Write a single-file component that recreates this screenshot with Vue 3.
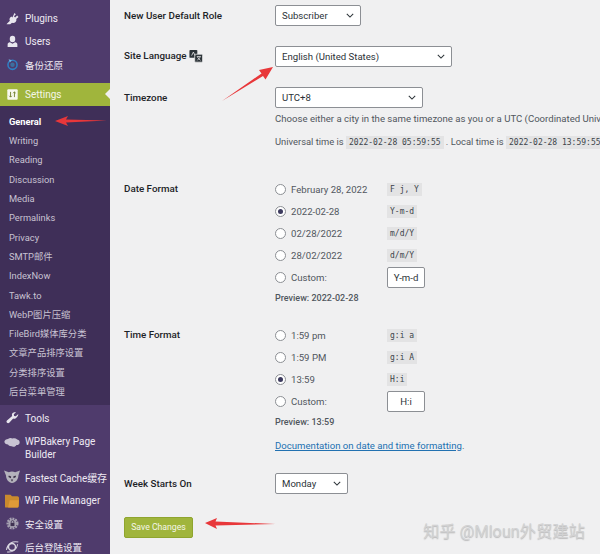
<script setup>
const subItems = [
  { label: 'General', current: true },
  { label: 'Writing' }, { label: 'Reading' }, { label: 'Discussion' }, { label: 'Media' },
  { label: 'Permalinks' }, { label: 'Privacy' }, { label: 'SMTP邮件' }, { label: 'IndexNow' },
  { label: 'Tawk.to' }, { label: 'WebP图片压缩' }, { label: 'FileBird媒体库分类' },
  { label: '文章产品排序设置' }, { label: '分类排序设置' }, { label: '后台菜单管理' }
]
const dateOptions = [
  { label: 'February 28, 2022', code: 'F j, Y' },
  { label: '2022-02-28', code: 'Y-m-d', checked: true },
  { label: '02/28/2022', code: 'm/d/Y' },
  { label: '28/02/2022', code: 'd/m/Y' }
]
const timeOptions = [
  { label: '1:59 pm', code: 'g:i a' },
  { label: '1:59 PM', code: 'g:i A' },
  { label: '13:59', code: 'H:i', checked: true }
]
</script>

<template>
  <div class="page">
    <aside class="sidebar">
      <ul class="menu top">
        <li>
          <svg class="ic" viewBox="0 0 20 20"><path fill="#e8e6ee" d="M13 1.500l2.200 2-3 3.200 1.800 1.800 3.200-3 2 2.200-3.400 3.200c.6 2 0 3.800-1.500 5-1.500 1.300-3.500 1.500-5 .6L6.500 19 1 19l0-.5 5-5c-1-1.500-.8-3.500.5-5l1.800-1.700 1.500 1.500z"/></svg>
          <span>Plugins</span>
        </li>
        <li>
          <svg class="ic" viewBox="0 0 20 20"><ellipse cx="10" cy="6" rx="4.200" ry="5" fill="#e8e6ee"/><path fill="#e8e6ee" d="M2.500 18.500V14.500c0-2 1.500-3.500 3.500-3.500l4 2.500 4-2.500c2 0 3.500 1.500 3.500 3.500v4z"/></svg>
          <span>Users</span>
        </li>
        <li>
          <svg class="ic" viewBox="0 0 20 20"><circle cx="10" cy="10.500" r="7" fill="none" stroke="#2f7fc4" stroke-width="2.400"/><circle cx="10" cy="10.500" r="3.400" fill="#3d6f9f"/><path d="M4 2l5 1.500-3 3.500z" fill="#6db0e0"/></svg>
          <span class="cjk">备份还原</span>
        </li>
      </ul>
      <div class="settings">
        <svg class="ic" viewBox="0 0 20 20"><rect x="2" y="2" width="16" height="16" rx="1.500" fill="#f7f8ee"/><path d="M7 6v8M5 12l2 2 2-2M13 14V6M11 8l2-2 2 2" fill="none" stroke="#6f7f2a" stroke-width="1.400"/></svg>
        <span>Settings</span>
        <i class="notch"></i>
      </div>
      <ul class="submenu">
        <li v-for="s in subItems" :key="s.label" :class="{ current: s.current }">{{ s.label }}</li>
      </ul>
      <ul class="menu bottom">
        <li>
          <svg class="ic" viewBox="0 0 20 20"><path fill="#e8e6ee" d="M18.500 3.500l-3.500 3-2.500-.5-.5-2.500 3.500-3c-2.500-.8-5 0-6 2-.6 1.300-.5 2.500 0 3.500L1.500 13c-1 1-1 2.500 0 3.500s2.500 1 3.500 0l6-6.500c1 .5 2.300.6 3.500 0 2-1 4-3.500 4.500-6.500z"/></svg>
          <span>Tools</span>
        </li>
        <li class="two">
          <svg class="ic wide" viewBox="0 0 20 14"><path fill="#c9c4d3" d="M5 2c2-1.500 4-1.500 5.500-.5C12.500.8 15 1 16.500 2.500 19 3 20 5 19.500 7c-.5 2-2.500 3-4 2.500-1 2-3.500 3-5.500 1.500-2 .5-4-.5-5-2C2.500 9 .5 7.500.5 5.500.5 3.500 3 2 5 2z"/></svg>
          <span>WPBakery Page<br>Builder</span>
        </li>
        <li>
          <svg class="ic wide" viewBox="0 0 20 16"><path fill="#b4b2bc" d="M0 0l6 2c2.500-1 5.500-1 8 0l6-2-2 6c0 5-3.500 9-8 9.500C6 15 2.500 11 2.500 6z"/><path fill="#3a3046" d="M6 6l3 1.500-.5 2L5.500 8zM14.500 6l-3 1.500.5 2L15 8zM8.500 11h3L10 14z"/></svg>
          <span class="tight">Fastest Cache缓存</span>
        </li>
        <li>
          <svg class="ic wide" viewBox="0 0 20 18"><path fill="#c98a2e" d="M1 1h7l2 2h7c1 0 2 1 2 2v10c0 1.500-1 2.500-2.500 2.500H2.500C1.500 17.500 1 17 1 16z"/><path fill="#e09a38" d="M7 8h12l-1.500 9.500H5z"/></svg>
          <span>WP File Manager</span>
        </li>
        <li>
          <svg class="ic" viewBox="0 0 20 20"><circle cx="10" cy="10" r="7.500" fill="none" stroke="#a7a2b2" stroke-width="3.500" stroke-dasharray="2.800 1.500"/><circle cx="10" cy="10" r="6.500" fill="#a7a2b2"/><rect x="7" y="9" width="6" height="5" fill="#3f3252"/><path d="M8 9V7.500a2 2 0 0 1 4 0V9" fill="none" stroke="#3f3252" stroke-width="1.200"/></svg>
          <span class="cjk">安全设置</span>
        </li>
        <li>
          <svg class="ic wide" viewBox="0 0 20 20"><circle cx="10" cy="10" r="5" fill="none" stroke="#d9d6e0" stroke-width="2"/><path d="M2 14C4 5 11 1 19 3M18 6c-1 8-7 12-15 11" fill="none" stroke="#d9d6e0" stroke-width="1.500"/></svg>
          <span class="cjk">后台登陆设置</span>
        </li>
      </ul>
    </aside>

    <main class="content">
      <div class="row r-role">
        <div class="label">New User Default Role</div>
        <div class="select s-role">Subscriber<svg viewBox="0 0 10 6"><path d="M1 1l4 4 4-4" fill="none" stroke="#2c3338" stroke-width="1.300"/></svg></div>
      </div>
      <div class="row r-lang">
        <div class="label lang">Site Language
          <svg class="trans" viewBox="0 0 16 16"><rect x="0.500" y="1" width="9" height="9" rx="1" fill="#2c3338"/><rect x="6.500" y="6" width="9" height="9" rx="1" fill="#2c3338" stroke="#f0f0f1" stroke-width="0.800"/><path d="M3 7.500l2-4 2 4M9 8.500h4.500M9.500 13l3.500-4M9.500 9l3.500 4" fill="none" stroke="#f0f0f1" stroke-width="0.900"/></svg>
        </div>
        <div class="select s-lang">English (United States)<svg viewBox="0 0 10 6"><path d="M1 1l4 4 4-4" fill="none" stroke="#2c3338" stroke-width="1.300"/></svg></div>
      </div>
      <div class="row r-zone">
        <div class="label">Timezone</div>
        <div class="field">
          <div class="select s-zone">UTC+8<svg viewBox="0 0 10 6"><path d="M1 1l4 4 4-4" fill="none" stroke="#2c3338" stroke-width="1.300"/></svg></div>
          <p class="desc">Choose either a city in the same timezone as you or a UTC (Coordinated Universal Time) time offset.</p>
          <p class="times">Universal time is <code>2022-02-28 05:59:55</code> . Local time is <code>2022-02-28 13:59:55</code> .</p>
        </div>
      </div>

      <div class="row r-date">
        <div class="label tall">Date Format</div>
        <div class="field">
          <div v-for="o in dateOptions" :key="o.code" class="opt">
            <i class="radio" :class="{ on: o.checked }"></i><span class="opt-label">{{ o.label }}</span><code>{{ o.code }}</code>
          </div>
          <div class="opt custom">
            <i class="radio"></i><span class="opt-label">Custom:</span><span class="input">Y-m-d</span>
          </div>
          <div class="preview">Preview: 2022-02-28</div>
        </div>
      </div>

      <div class="row r-time">
        <div class="label tall">Time Format</div>
        <div class="field">
          <div v-for="o in timeOptions" :key="o.code" class="opt">
            <i class="radio" :class="{ on: o.checked }"></i><span class="opt-label">{{ o.label }}</span><code>{{ o.code }}</code>
          </div>
          <div class="opt custom">
            <i class="radio"></i><span class="opt-label">Custom:</span><span class="input">H:i</span>
          </div>
          <div class="preview">Preview: 13:59</div>
          <div class="doc-line"><a class="doc">Documentation on date and time formatting</a>.</div>
        </div>
      </div>

      <div class="row r-week">
        <div class="label">Week Starts On</div>
        <div class="select s-week">Monday<svg viewBox="0 0 10 6"><path d="M1 1l4 4 4-4" fill="none" stroke="#2c3338" stroke-width="1.300"/></svg></div>
      </div>

      <button class="save">Save Changes</button>
    </main>

    <svg class="arrows" viewBox="0 0 600 554">
      <path fill="#e8373a" d="M55 121l13-5-2 3.500 41 1-41 2 2 3.500z"/>
      <path fill="#e8373a" d="M273 67l-14 3 2.500 3.500L222 101l41-25 2.500 3.500z"/>
      <path fill="#e8373a" d="M205 523l12-5-1.500 3.500 60 2.500-60 1.500 1.500 3.500z"/>
    </svg>
    <div class="mark">知乎 @Mloun外贸建站</div>
  </div>
</template>

<style>
html, body { margin: 0; background: #f0f0f1; overflow: hidden; }
</style>

<style scoped>
.page {
  position: relative;
  width: 600px;
  height: 554px;
  overflow: hidden;
  display: flex;
  background: #f0f0f1;
  font-family: Roboto, "Noto Sans CJK SC", sans-serif;
  font-size: 9.600px;
  color: #50575e;
}
ul { list-style: none; margin: 0; padding: 0; }
.sidebar {
  flex: 0 0 110px;
  width: 110px;
  background: #4f3b6c;
  color: #eeeaf3;
  display: flex;
  flex-direction: column;
  overflow: hidden;
}
.sidebar > * { flex-shrink: 0; }
.menu li {
  display: flex;
  align-items: center;
  height: 23.300px;
  padding-left: 25px;
  position: relative;
  font-size: 10px;
  white-space: nowrap;
}
.cjk { font-size: 9.500px; }
.menu.top { padding-top: 6.500px; margin-bottom: 7px; }
.ic {
  position: absolute;
  left: 6px;
  top: 50%;
  width: 13px;
  height: 13px;
  margin-top: -6.500px;
}
.ic.wide { left: 4px; width: 16px; height: 14px; margin-top: -7px; }
.settings {
  position: relative;
  display: flex;
  align-items: center;
  height: 23px;
  padding-left: 25px;
  background: #a0b53c;
  color: #f4f6e8;
  font-size: 10px;
}
.notch {
  position: absolute;
  right: 0;
  top: 6px;
  border: 5.500px solid transparent;
  border-right-color: #f0f0f1;
  border-left-width: 0;
}
.submenu {
  background: #3f2f58;
  padding: 5.500px 0 4px 9px;
  font-size: 9.300px;
  color: #c8c2d2;
}
.submenu li {
  height: 19.300px;
  line-height: 19.300px;
  white-space: nowrap;
}
.submenu li.current { color: #fff; font-weight: 700; }
.menu.bottom { padding-top: 1.500px; }
.menu.bottom li.two { height: 35.500px; line-height: 13px; }
.menu.bottom li.two .ic { top: 6px; margin-top: 0; }
.tight { letter-spacing: -0.100px; }

.content {
  flex: 1;
  min-width: 0;
  padding: 5px 0 0 14px;
  white-space: nowrap;
}
.row {
  display: flex;
  align-items: flex-start;
}
.label {
  flex: 0 0 151px;
  width: 151px;
  color: #1d2327;
  font-weight: 500;
  font-size: 9.800px;
  line-height: 20px;
}
.label.tall { line-height: 22px; }
.label.lang { display: flex; align-items: center; gap: 3px; }
.trans { width: 14px; height: 14px; }
.select {
  box-sizing: border-box;
  height: 21px;
  border: 1px solid #8c8f94;
  border-radius: 2px;
  background: #fff;
  color: #2c3338;
  line-height: 19px;
  padding-left: 6px;
  position: relative;
}
.select svg {
  position: absolute;
  right: 6px;
  top: 7px;
  width: 8px;
  height: 5px;
}
.s-role { width: 86px; }
.s-lang { width: 177px; }
.s-zone { width: 148px; }
.s-week { width: 73px; }
.r-lang { margin-top: 20px; }
.r-zone { margin-top: 20px; }
.r-zone .label, .r-role .label, .r-week .label { line-height: 21px; }
p { margin: 0; }
.desc { margin-top: 3px; line-height: 16px; }
.times { margin-top: 7px; line-height: 16px; font-size: 9.400px; }
code {
  font-family: "DejaVu Sans Mono", "Liberation Mono", monospace;
  font-size: 8px;
  background: #e3e3e4;
  color: #3c434a;
  padding: 2px 3px;
}
.r-date { margin-top: 27px; }
.r-time { margin-top: 15px; }
.r-week { margin-top: 16px; }
.opt {
  display: flex;
  align-items: center;
  height: 22px;
}
.radio {
  box-sizing: border-box;
  flex: 0 0 11px;
  width: 11px;
  height: 11px;
  border: 1px solid #8c8f94;
  border-radius: 50%;
  background: #fff;
  margin-right: 5px;
  position: relative;
}
.radio.on::after {
  content: "";
  position: absolute;
  left: 2px;
  top: 2px;
  width: 5px;
  height: 5px;
  border-radius: 50%;
  background: #3c3a5e;
}
.opt-label { width: 96px; flex: 0 0 96px; }
.input {
  box-sizing: border-box;
  width: 38px;
  height: 21px;
  border: 1px solid #8c8f94;
  border-radius: 2px;
  background: #fff;
  color: #2c3338;
  line-height: 19px;
  text-align: center;
}
.preview {
  height: 21px;
  line-height: 21px;
  font-size: 9px;
  font-weight: 500;
}
.doc-line { margin-top: 1.500px; line-height: 22px; }
.doc { color: #2271b1; text-decoration: underline; }
.save {
  display: block;
  box-sizing: border-box;
  margin: 23px 0 0;
  width: 69px;
  height: 21px;
  padding: 0;
  border: 1px solid #8fa52f;
  border-radius: 2px;
  background: #a0b53c;
  color: #f4f6e8;
  font: inherit;
  font-size: 8.700px;
}
.arrows {
  position: absolute;
  left: 0;
  top: 0;
  width: 600px;
  height: 554px;
  pointer-events: none;
}
.mark {
  position: absolute;
  right: 15px;
  bottom: 12px;
  color: #d2d2d3;
  font-size: 16.300px;
  text-shadow: 0 1px 1px rgba(120,120,120,.45);
  white-space: nowrap;
}
</style>
